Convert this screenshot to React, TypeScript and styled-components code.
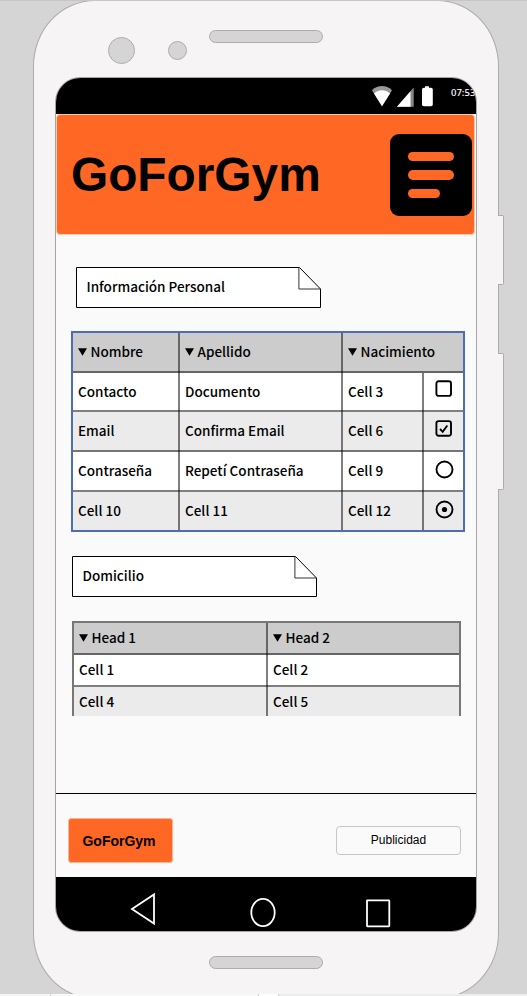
import React from "react";
import styled, { createGlobalStyle } from "styled-components";

const ORANGE = "#ff6725";
const LINE = "rgba(0, 0, 0, 0.5)";
const UI = '"Noto Sans CJK JP", "Noto Sans CJK SC", sans-serif';
const ARIAL = '"Liberation Sans", Arial, sans-serif';

const GlobalStyle = createGlobalStyle`
  *, *::before, *::after { box-sizing: border-box; }
  body { margin: 0; background: #d5d5d5; }
  svg { display: block; flex: none; }
`;

const Page = styled.div`
  width: 527px;
  height: 996px;
  overflow: hidden;
  background: #d5d5d5;
  color: #000;
`;

const Stage = styled.div`
  display: flex;
  align-items: flex-start;
  height: 994px;
  padding-left: 33px;
  overflow: hidden;
  border-top: 1px solid #c6c6c6;
`;

const Phone = styled.div`
  flex: none;
  width: 466px;
  height: 999px;
  margin-top: -1px;
  border: 1px solid #adabac;
  border-radius: 62px / 66px;
  background: #f6f4f5;
`;

const SideRail = styled.div`
  display: flex;
  flex-direction: column;
  padding-top: 214px;
  margin-left: -1px;
`;

const SideButton = styled.div<{ $h: number; $gap?: number }>`
  width: 6px;
  height: ${(p) => p.$h}px;
  margin-top: ${(p) => p.$gap ?? 0}px;
  border: 1px solid #adabac;
  border-left: 0;
  border-radius: 0 2px 2px 0;
  background: #f6f4f5;
`;

const TopBezel = styled.div`
  display: flex;
  align-items: flex-start;
  height: 76px;
  padding-left: 74px;
`;

const Lens = styled.div<{ $size: number; $top: number; $right: number }>`
  width: ${(p) => p.$size}px;
  height: ${(p) => p.$size}px;
  margin: ${(p) => p.$top}px ${(p) => p.$right}px 0 0;
  border: 1px solid #adabac;
  border-radius: 50%;
  background: #d5d5d5;
`;

const Slot = styled.div<{ $top: number }>`
  width: 114px;
  height: 13px;
  margin-top: ${(p) => p.$top}px;
  border: 1px solid #adabac;
  border-radius: 7px;
  background: #d5d5d5;
`;

const BottomBezel = styled.div`
  padding-left: 175px;
`;

const Screen = styled.div`
  display: flex;
  flex-direction: column;
  width: 422px;
  height: 855px;
  margin-left: 21px;
  border: 1px solid #a5a5a5;
  border-radius: 25px;
  background: #fafafa;
  overflow: hidden;
`;

const StatusBar = styled.div`
  display: flex;
  flex: none;
  height: 36px;
  padding: 8px 0 0 316px;
  background: #000;
  overflow: hidden;
`;

const Clock = styled.span`
  flex: none;
  margin-left: 17px;
  font: 500 9.5px/13px "Noto Sans", sans-serif;
  color: #fff;
`;

const Header = styled.header`
  display: flex;
  flex: none;
  align-items: center;
  justify-content: space-between;
  width: 419px;
  height: 121px;
  padding: 1px 2px 0 14px;
  border: 1px solid #ffc9b0;
  border-radius: 4px;
  background: ${ORANGE};
`;

const Title = styled.h1`
  margin: 0;
  font: bold 47.8px/60px ${ARIAL};
`;

const MenuButton = styled.button`
  display: flex;
  flex-direction: column;
  gap: 9px;
  width: 82px;
  height: 82px;
  padding: 18px 0 0 18px;
  border: 0;
  border-radius: 9px;
  background: #000;
`;

const MenuBar = styled.span<{ $w: number }>`
  width: ${(p) => p.$w}px;
  height: 9.3px;
  border-radius: 5px;
  background: ${ORANGE};
`;

const Content = styled.main`
  display: flex;
  flex: none;
  flex-direction: column;
  align-items: flex-start;
  height: 558px;
  padding: 32px 0 0 15px;
`;

const NoteBox = styled.div<{ $indent?: number }>`
  display: grid;
  align-items: center;
  width: 246px;
  height: 42px;
  margin-left: ${(p) => p.$indent ?? 0}px;
  & > * { grid-area: 1 / 1; }
`;

const NoteText = styled.span`
  padding: 0 0 4px 10.5px;
  font: 500 13.5px/20px ${UI};
`;

type TableProps = { $columns: string; $rows: string; $top: number; $indent?: number; $framed?: boolean };

const Table = styled.div<TableProps>`
  display: grid;
  grid-template-columns: ${(p) => p.$columns};
  grid-template-rows: ${(p) => p.$rows};
  margin: ${(p) => p.$top}px 0 0 ${(p) => p.$indent ?? 0}px;
  border: 2px solid ${(p) => (p.$framed ? "#4f6cb8" : "#777")};
  border-bottom-width: ${(p) => (p.$framed ? 2 : 0)}px;
  & + ${NoteBox} { margin-top: 24px; }
`;

type CellProps = { $tone: "head" | "plain" | "alt"; $right?: boolean; $bottom?: boolean; $span?: number };
const tones = { head: "#cccccc", plain: "#ffffff", alt: "#ebebeb" };

const Cell = styled.div<CellProps>`
  display: flex;
  align-items: center;
  grid-column: span ${(p) => p.$span ?? 1};
  min-width: 0;
  padding: 0 2px ${(p) => (p.$bottom ? 4 : 2)}px 5px;
  overflow: hidden;
  white-space: nowrap;
  font: 500 13.5px/20px ${UI};
  background:
    linear-gradient(${LINE}, ${LINE}) right / ${(p) => (p.$right ? 2 : 0)}px 100% no-repeat,
    linear-gradient(${LINE}, ${LINE}) bottom / 100% ${(p) => (p.$bottom ? 2 : 0)}px no-repeat,
    ${(p) => tones[p.$tone]};
`;

const ControlCell = styled(Cell)`
  align-items: flex-start;
  padding: 7px 0 0 11px;
`;

const Footer = styled.footer`
  display: flex;
  flex: none;
  justify-content: space-between;
  height: 84px;
  padding: 24px 15px 0 12px;
  border-top: 1px solid #000;
`;

const Brand = styled.div`
  width: 105px;
  height: 45px;
  padding-right: 3px;
  border: 1px solid #ffb493;
  border-radius: 3px;
  background: ${ORANGE};
  font: bold 14px/44px ${ARIAL};
  text-align: center;
`;

const AdButton = styled.button`
  width: 125px;
  height: 29px;
  margin-top: 8px;
  padding: 0;
  border: 1px solid #c6c6c6;
  border-radius: 4px;
  background: #fafafa;
  font: 12px/27px ${ARIAL};
  color: #000;
`;

const NavBar = styled.nav`
  display: flex;
  flex: none;
  height: 56px;
  padding: 15px 0 0 74px;
  gap: 88px;
  background: #000;
`;

const Strip = styled.div`
  display: grid;
  grid-template-columns: 50px 207px 19px 1fr;
  gap: 1px;
  height: 2px;
  background: #cfcfcf;
`;

const StripPart = styled.span<{ $c: string }>`
  background: ${(p) => p.$c};
`;

const Arrow = () => (
  <svg width="9" height="9" viewBox="0 0 9 9">
    <path d="M0 1.3H9L4.5 8.8Z" />
  </svg>
);

const HeadLabel = styled.span`
  display: flex;
  align-items: center;
  gap: 3.5px;
`;

const Head = ({ children, ...rest }: { children: string } & Omit<CellProps, "$tone">) => (
  <Cell $tone="head" $bottom {...rest}>
    <HeadLabel>
      <Arrow />
      {children}
    </HeadLabel>
  </Cell>
);

const Note = ({ children, indent }: { children: string; indent?: number }) => (
  <NoteBox $indent={indent}>
    <svg width="246" height="42" viewBox="0 0 246 42" fill="none" stroke="#000">
      <path d="M0.5 0.5H223.5L244.5 22V40.5H0.5Z" fill="#fff" />
      <path d="M222.9 0.5V22H244.5" stroke="#333" />
    </svg>
    <NoteText>{children}</NoteText>
  </NoteBox>
);

type ControlKind = "box" | "checked" | "circle" | "dot";

const Control = ({ kind }: { kind: ControlKind }) => (
  <svg width="20" height="20" viewBox="0 0 20 20" fill="none" stroke="#000" strokeWidth="1.9">
    {kind === "box" && <rect x="1.4" y="1.3" width="14.6" height="14.6" rx="2.2" />}
    {kind === "checked" && (
      <>
        <rect x="1.4" y="2.1" width="14.6" height="14.6" rx="2.2" />
        <path d="M5 10L7.7 12.8L12.3 6.5" />
      </>
    )}
    {(kind === "circle" || kind === "dot") && <circle cx="9.5" cy="10.5" r="8" />}
    {kind === "dot" && <circle cx="9.5" cy="10.5" r="2.6" fill="#000" stroke="none" />}
  </svg>
);

const rows: [string, string, string, ControlKind][] = [
  ["Contacto", "Documento", "Cell 3", "box"],
  ["Email", "Confirma Email", "Cell 6", "checked"],
  ["Contraseña", "Repetí Contraseña", "Cell 9", "circle"],
  ["Cell 10", "Cell 11", "Cell 12", "dot"],
];

const addressRows = [
  ["Cell 1", "Cell 2"],
  ["Cell 4", "Cell 5"],
];

export default function App() {
  return (
    <Page>
      <GlobalStyle />
      <Stage>
        <Phone>
          <TopBezel>
            <Lens $size={27} $top={36} $right={33} />
            <Lens $size={19} $top={40} $right={22} />
            <Slot $top={29} />
          </TopBezel>
          <Screen>
            <StatusBar>
              <svg width="62" height="22" viewBox="0 0 62 22" fill="#fff">
                <path d="M0 4.2C6-1.3 14-1.3 20 4.2L10 20.5Z" fill="#999" />
                <path d="M2 7.5C7 3.2 13 3.2 18 7.5L10 20Z" />
                <path d="M25 20.7L41.7 1.5V20.7Z" fill="#888" />
                <path d="M25 20.7L38.5 5.2V20.7Z" />
                <path d="M53 0.3H57V1.8H59Q60.8 1.8 60.8 3.5V18.5Q60.8 20.2 59 20.2H51.8Q50 20.2 50 18.5V3.5Q50 1.8 51.8 1.8H53Z" />
              </svg>
              <Clock>07:53</Clock>
            </StatusBar>
            <Header>
              <Title>GoForGym</Title>
              <MenuButton aria-label="Menú">
                <MenuBar $w={46} />
                <MenuBar $w={46} />
                <MenuBar $w={32} />
              </MenuButton>
            </Header>
            <Content>
              <Note indent={5}>Información Personal</Note>
              <Table $framed $top={22} $columns="107px 163px 81px 39px" $rows="40px 39px 40px 40px 38px">
                <Head $right>Nombre</Head>
                <Head $right>Apellido</Head>
                <Head $span={2}>Nacimiento</Head>
                {rows.map(([a, b, c, kind], i) => {
                  const tone = i % 2 ? "alt" : "plain";
                  const bottom = i < rows.length - 1;
                  return (
                    <React.Fragment key={a}>
                      <Cell $tone={tone} $right $bottom={bottom}>{a}</Cell>
                      <Cell $tone={tone} $right $bottom={bottom}>{b}</Cell>
                      <Cell $tone={tone} $right $bottom={bottom}>{c}</Cell>
                      <ControlCell $tone={tone} $bottom={bottom}>
                        <Control kind={kind} />
                      </ControlCell>
                    </React.Fragment>
                  );
                })}
              </Table>
              <Note indent={1}>Domicilio</Note>
              <Table $top={23} $indent={1} $columns="194px 191px" $rows="32px 32px 29px">
                <Head $right>Head 1</Head>
                <Head>Head 2</Head>
                {addressRows.map(([a, b], i) => (
                  <React.Fragment key={a}>
                    <Cell $tone={i ? "alt" : "plain"} $right $bottom={i === 0}>{a}</Cell>
                    <Cell $tone={i ? "alt" : "plain"} $bottom={i === 0}>{b}</Cell>
                  </React.Fragment>
                ))}
              </Table>
            </Content>
            <Footer>
              <Brand>GoForGym</Brand>
              <AdButton>Publicidad</AdButton>
            </Footer>
            <NavBar>
              <svg width="26" height="34" viewBox="0 0 26 34" fill="none" stroke="#fff" strokeWidth="1.8">
                <path d="M24 2.5V31.5L2 17Z" />
              </svg>
              <svg width="34" height="38" viewBox="-4 0 34 38" fill="none" stroke="#fff" strokeWidth="1.8">
                <ellipse cx="15" cy="20.5" rx="11.7" ry="13.6" />
              </svg>
              <svg width="34" height="38" viewBox="-4 0 34 38" fill="none" stroke="#fff" strokeWidth="1.8">
                <rect x="-3" y="8.3" width="22.3" height="26" rx="0.5" />
              </svg>
            </NavBar>
          </Screen>
          <BottomBezel>
            <Slot $top={24} />
          </BottomBezel>
        </Phone>
        <SideRail>
          <SideButton $h={70} />
          <SideButton $h={137} $gap={68} />
        </SideRail>
      </Stage>
      <Strip>
        <StripPart $c="#f7f7f7" />
        <StripPart $c="#f9f8f9" />
        <StripPart $c="#ffffff" />
        <StripPart $c="#ededed" />
      </Strip>
    </Page>
  );
}
